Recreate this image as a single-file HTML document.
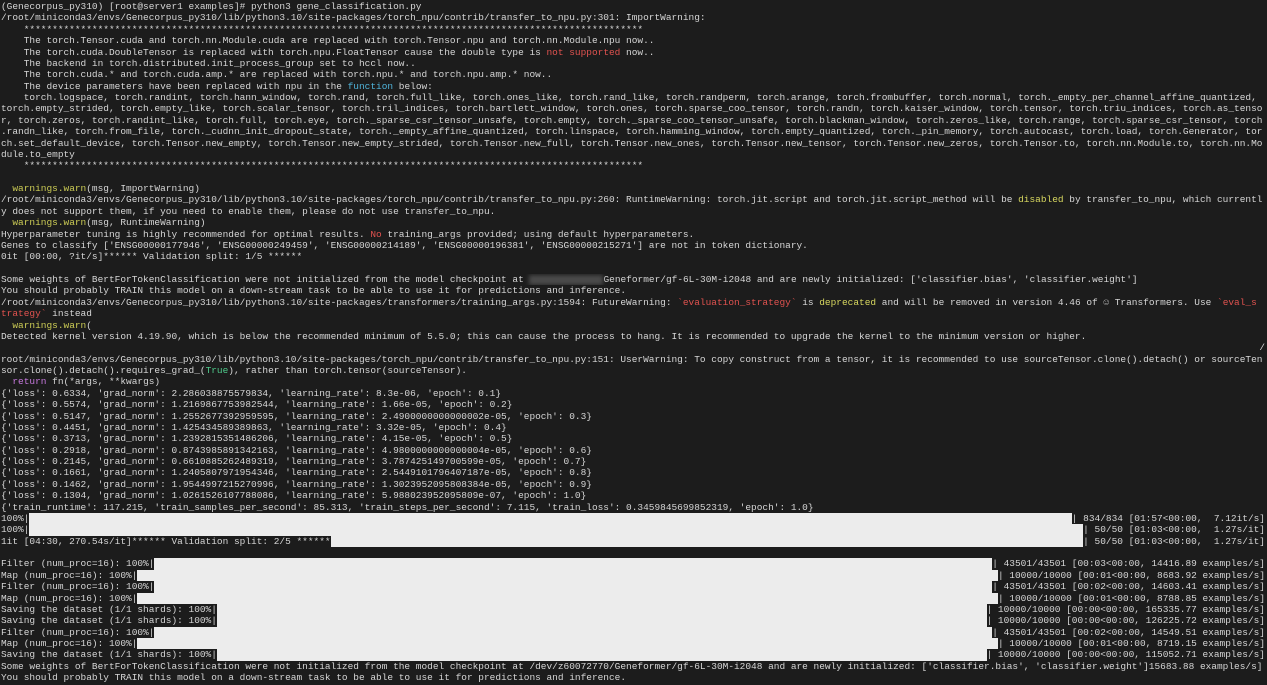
<!DOCTYPE html>
<html><head><meta charset="utf-8">
<style>
html,body{margin:0;padding:0;background:#1c1c1c;width:1267px;height:685px;overflow:hidden}
#t{position:absolute;left:1px;top:1px;width:1264px;font-family:"Liberation Mono","DejaVu Sans Mono",monospace;font-size:9.48px;line-height:11.38px;color:#d6d6d6}
.l{height:11.38px;white-space:pre;overflow:hidden}
.p{display:flex;height:11.38px;white-space:pre}
.p .b{flex:1;background:#ececec}
.r{text-align:right}
.y{color:#d7d75f}.w{color:#cccc55}.rd{color:#e0524f}.c{color:#4fb3d9}.g{color:#4ec98a}.m{color:#c678dd}
.bl{display:inline-block;width:74px;height:10px;background:#4a4a4a;filter:blur(2px);vertical-align:middle}
</style></head><body><div id="t">
<div class="l">(Genecorpus_py310) [root@server1 examples]# python3 gene_classification.py</div>
<div class="l">/root/miniconda3/envs/Genecorpus_py310/lib/python3.10/site-packages/torch_npu/contrib/transfer_to_npu.py:301: ImportWarning:</div>
<div class="l">    *************************************************************************************************************</div>
<div class="l">    The torch.Tensor.cuda and torch.nn.Module.cuda are replaced with torch.Tensor.npu and torch.nn.Module.npu now..</div>
<div class="l">    The torch.cuda.DoubleTensor is replaced with torch.npu.FloatTensor cause the double type is <span class="rd">not supported</span> now..</div>
<div class="l">    The backend in torch.distributed.init_process_group set to hccl now..</div>
<div class="l">    The torch.cuda.* and torch.cuda.amp.* are replaced with torch.npu.* and torch.npu.amp.* now..</div>
<div class="l">    The device parameters have been replaced with npu in the <span class="c">function</span> below:</div>
<div class="l">    torch.logspace, torch.randint, torch.hann_window, torch.rand, torch.full_like, torch.ones_like, torch.rand_like, torch.randperm, torch.arange, torch.frombuffer, torch.normal, torch._empty_per_channel_affine_quantized,</div>
<div class="l">torch.empty_strided, torch.empty_like, torch.scalar_tensor, torch.tril_indices, torch.bartlett_window, torch.ones, torch.sparse_coo_tensor, torch.randn, torch.kaiser_window, torch.tensor, torch.triu_indices, torch.as_tenso</div>
<div class="l">r, torch.zeros, torch.randint_like, torch.full, torch.eye, torch._sparse_csr_tensor_unsafe, torch.empty, torch._sparse_coo_tensor_unsafe, torch.blackman_window, torch.zeros_like, torch.range, torch.sparse_csr_tensor, torch</div>
<div class="l">.randn_like, torch.from_file, torch._cudnn_init_dropout_state, torch._empty_affine_quantized, torch.linspace, torch.hamming_window, torch.empty_quantized, torch._pin_memory, torch.autocast, torch.load, torch.Generator, tor</div>
<div class="l">ch.set_default_device, torch.Tensor.new_empty, torch.Tensor.new_empty_strided, torch.Tensor.new_full, torch.Tensor.new_ones, torch.Tensor.new_tensor, torch.Tensor.new_zeros, torch.Tensor.to, torch.nn.Module.to, torch.nn.Mo</div>
<div class="l">dule.to_empty</div>
<div class="l">    *************************************************************************************************************</div>
<div class="l"> </div>
<div class="l">  <span class="w">warnings.warn</span>(msg, ImportWarning)</div>
<div class="l">/root/miniconda3/envs/Genecorpus_py310/lib/python3.10/site-packages/torch_npu/contrib/transfer_to_npu.py:260: RuntimeWarning: torch.jit.script and torch.jit.script_method will be <span class="y">disabled</span> by transfer_to_npu, which currentl</div>
<div class="l">y does not support them, if you need to enable them, please do not use transfer_to_npu.</div>
<div class="l">  <span class="w">warnings.warn</span>(msg, RuntimeWarning)</div>
<div class="l">Hyperparameter tuning is highly recommended for optimal results. <span class="rd">No</span> training_args provided; using default hyperparameters.</div>
<div class="l">Genes to classify ['ENSG00000177946', 'ENSG00000249459', 'ENSG00000214189', 'ENSG00000196381', 'ENSG00000215271'] are not in token dictionary.</div>
<div class="l">0it [00:00, ?it/s]****** Validation split: 1/5 ******</div>
<div class="l"> </div>
<div class="l">Some weights of BertForTokenClassification were not initialized from the model checkpoint at <span class="bl"></span>Geneformer/gf-6L-30M-i2048 and are newly initialized: ['classifier.bias', 'classifier.weight']</div>
<div class="l">You should probably TRAIN this model on a down-stream task to be able to use it for predictions and inference.</div>
<div class="l">/root/miniconda3/envs/Genecorpus_py310/lib/python3.10/site-packages/transformers/training_args.py:1594: FutureWarning: <span class="rd">`evaluation_strategy`</span> is <span class="y">deprecated</span> and will be removed in version 4.46 of ☺ Transformers. Use <span class="rd">`eval_s</span></div>
<div class="l"><span class="rd">trategy`</span> instead</div>
<div class="l">  <span class="w">warnings.warn</span>(</div>
<div class="l">Detected kernel version 4.19.90, which is below the recommended minimum of 5.5.0; this can cause the process to hang. It is recommended to upgrade the kernel to the minimum version or higher.</div>
<div class="l r">/</div>
<div class="l">root/miniconda3/envs/Genecorpus_py310/lib/python3.10/site-packages/torch_npu/contrib/transfer_to_npu.py:151: UserWarning: To copy construct from a tensor, it is recommended to use sourceTensor.clone().detach() or sourceTen</div>
<div class="l">sor.clone().detach().requires_grad_(<span class="g">True</span>), rather than torch.tensor(sourceTensor).</div>
<div class="l">  <span class="m">return</span> fn(*args, **kwargs)</div>
<div class="l">{'loss': 0.6334, 'grad_norm': 2.286038875579834, 'learning_rate': 8.3e-06, 'epoch': 0.1}</div>
<div class="l">{'loss': 0.5574, 'grad_norm': 1.2169867753982544, 'learning_rate': 1.66e-05, 'epoch': 0.2}</div>
<div class="l">{'loss': 0.5147, 'grad_norm': 1.2552677392959595, 'learning_rate': 2.4900000000000002e-05, 'epoch': 0.3}</div>
<div class="l">{'loss': 0.4451, 'grad_norm': 1.425434589389863, 'learning_rate': 3.32e-05, 'epoch': 0.4}</div>
<div class="l">{'loss': 0.3713, 'grad_norm': 1.2392815351486206, 'learning_rate': 4.15e-05, 'epoch': 0.5}</div>
<div class="l">{'loss': 0.2918, 'grad_norm': 0.8743985891342163, 'learning_rate': 4.9800000000000004e-05, 'epoch': 0.6}</div>
<div class="l">{'loss': 0.2145, 'grad_norm': 0.6610885262489319, 'learning_rate': 3.787425149700599e-05, 'epoch': 0.7}</div>
<div class="l">{'loss': 0.1661, 'grad_norm': 1.2405807971954346, 'learning_rate': 2.5449101796407187e-05, 'epoch': 0.8}</div>
<div class="l">{'loss': 0.1462, 'grad_norm': 1.9544997215270996, 'learning_rate': 1.3023952095808384e-05, 'epoch': 0.9}</div>
<div class="l">{'loss': 0.1304, 'grad_norm': 1.0261526107788086, 'learning_rate': 5.988023952095809e-07, 'epoch': 1.0}</div>
<div class="l">{'train_runtime': 117.215, 'train_samples_per_second': 85.313, 'train_steps_per_second': 7.115, 'train_loss': 0.3459845699852319, 'epoch': 1.0}</div>
<div class="p"><span>100%|</span><span class="b"></span><span>| 834/834 [01:57&lt;00:00,  7.12it/s]</span></div>
<div class="p"><span>100%|</span><span class="b"></span><span>| 50/50 [01:03&lt;00:00,  1.27s/it]</span></div>
<div class="p"><span>1it [04:30, 270.54s/it]****** Validation split: 2/5 ******</span><span class="b"></span><span>| 50/50 [01:03&lt;00:00,  1.27s/it]</span></div>
<div class="l"> </div>
<div class="p"><span>Filter (num_proc=16): 100%|</span><span class="b"></span><span>| 43501/43501 [00:03&lt;00:00, 14416.89 examples/s]</span></div>
<div class="p"><span>Map (num_proc=16): 100%|</span><span class="b"></span><span>| 10000/10000 [00:01&lt;00:00, 8683.92 examples/s]</span></div>
<div class="p"><span>Filter (num_proc=16): 100%|</span><span class="b"></span><span>| 43501/43501 [00:02&lt;00:00, 14603.41 examples/s]</span></div>
<div class="p"><span>Map (num_proc=16): 100%|</span><span class="b"></span><span>| 10000/10000 [00:01&lt;00:00, 8788.85 examples/s]</span></div>
<div class="p"><span>Saving the dataset (1/1 shards): 100%|</span><span class="b"></span><span>| 10000/10000 [00:00&lt;00:00, 165335.77 examples/s]</span></div>
<div class="p"><span>Saving the dataset (1/1 shards): 100%|</span><span class="b"></span><span>| 10000/10000 [00:00&lt;00:00, 126225.72 examples/s]</span></div>
<div class="p"><span>Filter (num_proc=16): 100%|</span><span class="b"></span><span>| 43501/43501 [00:02&lt;00:00, 14549.51 examples/s]</span></div>
<div class="p"><span>Map (num_proc=16): 100%|</span><span class="b"></span><span>| 10000/10000 [00:01&lt;00:00, 8719.15 examples/s]</span></div>
<div class="p"><span>Saving the dataset (1/1 shards): 100%|</span><span class="b"></span><span>| 10000/10000 [00:00&lt;00:00, 115052.71 examples/s]</span></div>
<div class="l">Some weights of BertForTokenClassification were not initialized from the model checkpoint at /dev/z60072770/Geneformer/gf-6L-30M-i2048 and are newly initialized: ['classifier.bias', 'classifier.weight']15683.88 examples/s]</div>
<div class="l">You should probably TRAIN this model on a down-stream task to be able to use it for predictions and inference.</div>
</div></body></html>
